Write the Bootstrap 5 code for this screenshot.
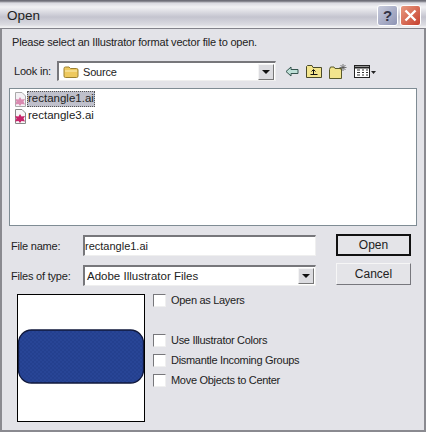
<!DOCTYPE html>
<html lang="en">
<head>
  <meta charset="UTF-8" />
  <meta name="viewport" content="width=device-width, initial-scale=1.0"/>
  <title>Open</title>
  <link rel="stylesheet" href="https://cdn.jsdelivr.net/npm/bootstrap@5.3.0/dist/css/bootstrap.min.css" />
  <style>
    html, body { height: 100%; }
    body {
      width: 426px; height: 432px; overflow: hidden;
      background: #e3e3e8; color: #222;
      font-family: "Liberation Sans", Arial, sans-serif; font-size: 11px; line-height: 14px;
      letter-spacing: -.2px;
    }
    .dlg-title {
      height: 28px; padding: 3px 5px 0 7px;
      background: linear-gradient(#6e6e78 0, #6e6e78 1px, #d9d9e0 3px, #f1f1f4 7px, #c4c4cf 17px, #dcdce2 25px, #f0f0f2 27px);
      font-size: 13.5px; letter-spacing: 0;
    }
    .dlg-body {
      height: 404px; border: 1px solid #8a8a90; border-left-width: 2px; border-right-width: 2px; border-bottom-width: 2px;
      border-top: 1px solid #83838b; padding: 6px 7px 0 7px;
    }
    .cap-btn { width: 21px; height: 21px; border-radius: 3px; border: 1px solid #fff; }
    .cap-help { background: linear-gradient(135deg, #c8cbdc, #8e94b4); margin-right: 2px; color: #334; font-weight: 700; font-size: 15px; line-height: 19px; text-align: center; }
    .cap-close { background: linear-gradient(135deg, #e89a80, #c7402e); }
    .intro { margin: 0 0 0 3px; height: 14px; }
    .lookin-row { height: 20px; margin-top: 12px; }
    .lbl-look { width: 43px; margin-left: 5px; }
    .combo-box { height: 20px; background: #fff; border-top: 2px solid #77777b; border-left: 2px solid #77777b; border-bottom: 1px solid #efefef; border-right: 1px solid #efefef; border-radius: 0; }
    .combo-look { width: 219px; padding: 0 1px 0 4px; }
    .combo-type { width: 233px; height: 21px; padding: 0 1px 0 2px; font-size: 11.5px; letter-spacing: 0; }
    .drop-btn { width: 16px; height: 16px; background: #dcdce0; border: 1px solid; border-color: #f4f4f4 #777 #777 #f4f4f4; }
    .drop-btn::after { content: ""; border-left: 4px solid transparent; border-right: 4px solid transparent; border-top: 4px solid #111; }
    .tool-icons { margin-left: 9px; gap: 7px; }
    .file-box { height: 138px; margin: 7px 0 0 0; background: #fff; border: 1px solid #7f8c94; padding: 2px 4px; width: 408px; }
    .file-row { height: 16px; margin-bottom: 1px; }
    .file-name { padding: 0 1px; height: 16px; line-height: 15px; font-size: 11.5px; letter-spacing: 0; }
    .file-sel { background: #bfc0cb; outline: 1px dotted #555; outline-offset: -1px; }
    .form-area { margin-top: 9px; }
    .field-row { height: 21px; margin-bottom: 9px; }
    .field-row:last-child { margin-bottom: 8px; }
    .lbl-field { width: 72px; margin-left: 2px; }
    .field-input { width: 233px; height: 21px; padding: 0; font-size: 11px; line-height: 18px; color: #222; letter-spacing: 0; }
    .field-input:focus { box-shadow: none; }
    .side-btns { margin-left: 20px; width: 75px; margin-top: -1px; }
    .win-btn {
      width: 75px; height: 22px; padding: 0; margin-bottom: 7px; border-radius: 0; font-size: 12px; line-height: 19px; color: #222;
      background: #e4e4e8; border: 1px solid; border-color: #f6f6f6 #77777d #77777d #f6f6f6; letter-spacing: 0;
    }
    .win-btn-main { border: 2px solid #111; }
    .lower-row { margin: 0 0 0 8px; }
    .preview-pane { width: 128px; height: 128px; background: #fff; border: 1px solid #000; padding-top: 34px; }
    .opt-list { margin-left: 8px; margin-top: -4px; }
    .opt-row { height: 20px; margin: 0; padding: 0; min-height: 0; font-size: 11px; letter-spacing: -.3px; }
    .opt-row .form-check-input {
      width: 13px; height: 13px; margin: 0 5px 0 0; float: none; border-radius: 0; background-color: #fff;
      border: 1px solid; border-color: #77777b #f0f0f0 #f0f0f0 #77777b;
    }
    .opt-gap { margin-bottom: 20px; }
  </style>
</head>
<body>
  <!-- title bar -->
  <div class="dlg-title d-flex align-items-center justify-content-between">
    <span>Open</span>
    <div class="d-flex">
      <div class="cap-btn cap-help">?</div>
      <div class="cap-btn cap-close d-flex align-items-center justify-content-center">
        <svg width="13" height="13" viewBox="0 0 13 13"><path d="M1.5 1.5L11.5 11.5M11.5 1.5L1.5 11.5" stroke="#fff" stroke-width="2.4"/></svg>
      </div>
    </div>
  </div>

  <div class="dlg-body">
    <p class="intro">Please select an Illustrator format vector file to open.</p>

    <!-- look in -->
    <div class="lookin-row d-flex align-items-center">
      <span class="lbl-look">Look in:</span>
      <div class="combo-box combo-look d-flex align-items-center">
        <svg width="16" height="14" viewBox="0 0 16 14" class="me-1"><path d="M1 3.5Q1 2 2.500 2H6L7.500 3.500H13.500Q15 3.500 15 5V11Q15 12.500 13.500 12.500H2.500Q1 12.500 1 11Z" fill="#eec95e" stroke="#9c8130"/><path d="M2 6H14" stroke="#fbeeb8"/></svg>
        <span class="flex-grow-1">Source</span>
        <div class="drop-btn d-flex align-items-center justify-content-center"></div>
      </div>
      <div class="tool-icons d-flex align-items-center">
        <svg width="14" height="11" viewBox="0 0 14 11"><path d="M1 5.500L6 1V3.500H13V7.500H6V10Z" fill="#bfe0d8" stroke="#35554f"/></svg>
        <svg width="16" height="14" viewBox="0 0 16 14"><path d="M.5 2.500V13.500H15.500V3.500H7L6 1.500H1.500Z" fill="#f3e58d" stroke="#4a4a2a"/><path d="M4.500 10.500H11.500M7.500 10.500V6M5.500 7.500L7.500 5.500L9.500 7.500" fill="none" stroke="#111"/></svg>
        <svg width="18" height="15" viewBox="0 0 18 15"><path d="M.5 5.500V14.500H12.500V4.500H6L5 3H1.500Z" fill="#f3e58d" stroke="#5a5a2a"/><path d="M14 0V7M10.500 3.500H17.500M11.500 1L16.500 6M16.500 1L11.500 6" stroke="#555" stroke-width=".8"/></svg>
        <svg width="22" height="13" viewBox="0 0 22 13"><rect x=".5" y=".5" width="15" height="12" fill="#fff" stroke="#222"/><path d="M1 2.500H15" stroke="#222" stroke-width="2"/><path d="M3 5H6M8 5H10M12 5H14M3 7.500H6M8 7.500H10M12 7.500H14M3 10H6M8 10H10M12 10H14" stroke="#333"/><path d="M17 6H22L19.500 9Z" fill="#222"/></svg>
      </div>
    </div>

    <!-- file list -->
    <div class="file-box">
      <div class="file-row d-flex align-items-center">
        <svg width="13" height="15" viewBox="0 0 13 15"><path d="M1.500 .5H8L11.500 4V14.500H1.500Z" fill="#f4f0f4" stroke="#aaa"/><path d="M6 5L7.500 7.500L11 7L9.500 9.500L11 12.500L7.500 12L6 14L4.500 12L1 12.500L2.500 9.500L1 7L4.500 7.500Z" fill="#d98ab0"/></svg>
        <span class="file-name file-sel">rectangle1.ai</span>
      </div>
      <div class="file-row d-flex align-items-center">
        <svg width="13" height="15" viewBox="0 0 13 15"><path d="M1.500 .5H8L11.500 4V14.500H1.500Z" fill="#f7f7f7" stroke="#888"/><path d="M6 5L7.500 7.500L11 7L9.500 9.500L11 12.500L7.500 12L6 14L4.500 12L1 12.500L2.500 9.500L1 7L4.500 7.500Z" fill="#c8246a"/></svg>
        <span class="file-name">rectangle3.ai</span>
      </div>
    </div>

    <!-- name and type -->
    <div class="form-area d-flex">
      <div>
        <div class="field-row d-flex align-items-center">
          <label class="lbl-field" for="fname">File name:</label>
          <input id="fname" class="form-control combo-box field-input" type="text" value="rectangle1.ai" />
        </div>
        <div class="field-row d-flex align-items-center">
          <span class="lbl-field">Files of type:</span>
          <div class="combo-box combo-type d-flex align-items-center">
            <span class="flex-grow-1">Adobe Illustrator Files</span>
            <div class="drop-btn d-flex align-items-center justify-content-center"></div>
          </div>
        </div>
      </div>
      <div class="side-btns">
        <button class="btn win-btn win-btn-main d-block" type="button">Open</button>
        <button class="btn win-btn d-block" type="button">Cancel</button>
      </div>
    </div>

    <!-- preview and options -->
    <div class="lower-row d-flex">
      <div class="preview-pane">
        <svg width="126" height="56" viewBox="0 0 126 56" class="d-block">
          <defs>
            <pattern id="dots" width="4" height="4" patternUnits="userSpaceOnUse">
              <rect width="4" height="4" fill="#24408f"/>
              <circle cx="1" cy="1" r=".8" fill="#2c4c9f"/>
              <circle cx="3" cy="3" r=".8" fill="#2c4c9f"/>
            </pattern>
          </defs>
          <rect x=".5" y="1" width="125" height="53" rx="13" fill="url(#dots)" stroke="#10183c" stroke-width="1.300"/>
        </svg>
      </div>
      <div class="opt-list">
        <div class="form-check opt-row opt-gap d-flex align-items-center">
          <input id="o1" class="form-check-input" type="checkbox" />
          <label for="o1">Open as Layers</label>
        </div>
        <div class="form-check opt-row d-flex align-items-center">
          <input id="o2" class="form-check-input" type="checkbox" />
          <label for="o2">Use Illustrator Colors</label>
        </div>
        <div class="form-check opt-row d-flex align-items-center">
          <input id="o3" class="form-check-input" type="checkbox" />
          <label for="o3">Dismantle Incoming Groups</label>
        </div>
        <div class="form-check opt-row d-flex align-items-center">
          <input id="o4" class="form-check-input" type="checkbox" />
          <label for="o4">Move Objects to Center</label>
        </div>
      </div>
    </div>
  </div>
  <script src="https://cdn.jsdelivr.net/npm/bootstrap@5.3.0/dist/js/bootstrap.bundle.min.js"></script>
</body>
</html>
